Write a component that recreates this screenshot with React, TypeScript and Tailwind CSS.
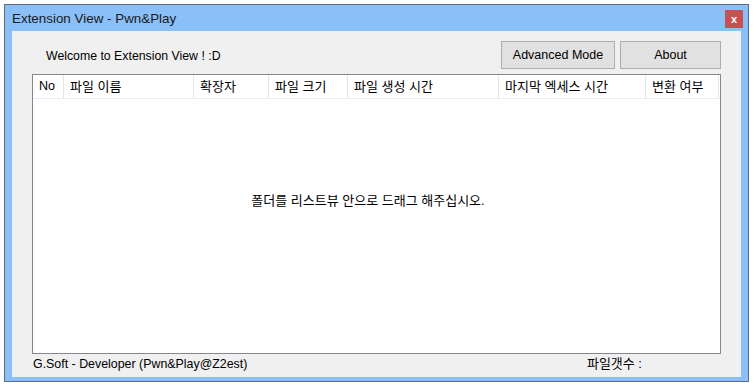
import React from "react";

const cols: { label: string; w: string; ko: boolean }[] = [
  { label: "No", w: "w-[31px]", ko: false },
  { label: "파일 이름", w: "w-[130px]", ko: true },
  { label: "확장자", w: "w-[75px]", ko: true },
  { label: "파일 크기", w: "w-[79px]", ko: true },
  { label: "파일 생성 시간", w: "w-[151px]", ko: true },
  { label: "마지막 엑세스 시간", w: "w-[147px]", ko: true },
  { label: "변환 여부", w: "w-[73px]", ko: true },
];

export default function App() {
  return (
    <div className="w-[754px] h-[387px] bg-white pt-[4px] pl-[4px] text-[12px] text-black font-['Liberation_Sans','Noto_Sans_CJK_KR',sans-serif]">
      <div className="w-[745px] h-[378px] border border-[#5f6b7a] bg-[#8bbff7] flex flex-col px-[7px] pb-[4px]">
        {/* title bar */}
        <div className="h-[26px] flex items-center justify-between shrink-0">
          <span className="text-[13.4px] leading-none text-[#1a1a1a] pt-[1px]">Extension View - Pwn&amp;Play</span>
          <div className="w-[18px] h-[18px] bg-[#c75050] mr-[-2px] mt-[2px] flex items-center justify-center text-white text-[11px] font-bold leading-none">
            x
          </div>
        </div>
        {/* client */}
        <div className="flex-1 bg-[#f0f0f0] flex flex-col px-[20px] pt-[10px]">
          <div className="flex items-center h-[28px] shrink-0">
            <span className="ml-[14px] flex-1 pt-[2px] text-[12.3px]">Welcome to Extension View ! :D</span>
            <button className="w-[114px] h-[28px] border border-[#adadad] bg-[#e1e1e1] text-[12.5px] leading-none">
              Advanced Mode
            </button>
            <button className="w-[101px] h-[28px] ml-[5px] border border-[#adadad] bg-[#e1e1e1] text-[12.5px] leading-none">
              About
            </button>
          </div>
          <div className="mt-[5px] h-[280px] border border-[#828790] bg-white flex flex-col shrink-0">
            <div className="h-[24px] flex border-b border-[#e5ecf5] shrink-0">
              {cols.map((c) => (
                <div
                  key={c.label}
                  className={`${c.w} h-full border-r border-[#e5e5e5] pl-[6px] flex items-center whitespace-nowrap ${c.ko ? "text-[13px]" : "text-[12.5px]"}`}
                >
                  {c.label}
                </div>
              ))}
            </div>
            <div className="flex-1 flex justify-center pt-[92px] pr-[17px]">
              <span className="text-[13px]">폴더를 리스트뷰 안으로 드래그 해주십시오.</span>
            </div>
          </div>
          <div className="flex items-center h-[18px] mt-[1px]">
            <span className="ml-[1px] text-[12.4px]">G.Soft - Developer (Pwn&amp;Play@Z2est)</span>
            <span className="ml-auto mr-[79px] text-[13px]">파일갯수 :</span>
          </div>
        </div>
      </div>
    </div>
  );
}
